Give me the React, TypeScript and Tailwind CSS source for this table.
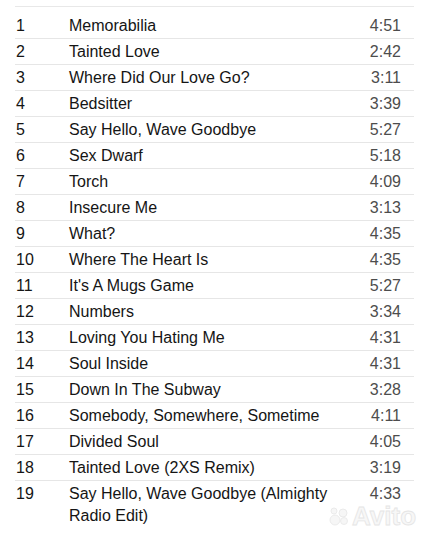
const tracks: [string, string][] = [
  ["Memorabilia", "4:51"],
  ["Tainted Love", "2:42"],
  ["Where Did Our Love Go?", "3:11"],
  ["Bedsitter", "3:39"],
  ["Say Hello, Wave Goodbye", "5:27"],
  ["Sex Dwarf", "5:18"],
  ["Torch", "4:09"],
  ["Insecure Me", "3:13"],
  ["What?", "4:35"],
  ["Where The Heart Is", "4:35"],
  ["It's A Mugs Game", "5:27"],
  ["Numbers", "3:34"],
  ["Loving You Hating Me", "4:31"],
  ["Soul Inside", "4:31"],
  ["Down In The Subway", "3:28"],
  ["Somebody, Somewhere, Sometime", "4:11"],
  ["Divided Soul", "4:05"],
  ["Tainted Love (2XS Remix)", "3:19"],
  ["Say Hello, Wave Goodbye (Almighty Radio Edit)", "4:33"],
];

export default function App() {
  return (
    <div
      className="relative w-[429px] h-[540px] overflow-hidden bg-white pt-[6px]"
      style={{ fontFamily: '"Liberation Sans", Arial, sans-serif' }}
    >
      <div className="mx-[15px] border-t border-[#e8e8e8] pt-[6px]">
        {tracks.map(([title, time], i) => (
          <div
            key={i}
            className={`flex pt-[2px] pb-[1px] text-[16px] leading-[22px] ${
              i < tracks.length - 1 ? "border-b border-[#e6e6e6]" : ""
            }`}
          >
            <div className="w-[54px] shrink-0 pl-[1px] text-[#151515]">{i + 1}</div>
            <div className="flex-1 pr-[8px] text-[#151515]">{title}</div>
            <div className="w-[56px] shrink-0 pr-[13px] text-right text-[#4d4d4d]">{time}</div>
          </div>
        ))}
      </div>

      <div className="pointer-events-none absolute left-[328px] top-[503px] flex items-center gap-[2px] opacity-80">
        <svg width="22" height="22" viewBox="0 0 22 22">
          <g fill="#f4f4f4" stroke="#e2e2e2" strokeWidth="0.8">
            <circle cx="7" cy="15" r="5" />
            <circle cx="15" cy="8" r="4" />
            <circle cx="6" cy="6" r="3" />
            <circle cx="16" cy="16" r="3.5" />
          </g>
        </svg>
        <span
          className="text-[26px] font-bold leading-none text-[#f6f6f6]"
          style={{ WebkitTextStroke: "0.8px #e0e0e0" }}
        >
          Avito
        </span>
      </div>
    </div>
  );
}
